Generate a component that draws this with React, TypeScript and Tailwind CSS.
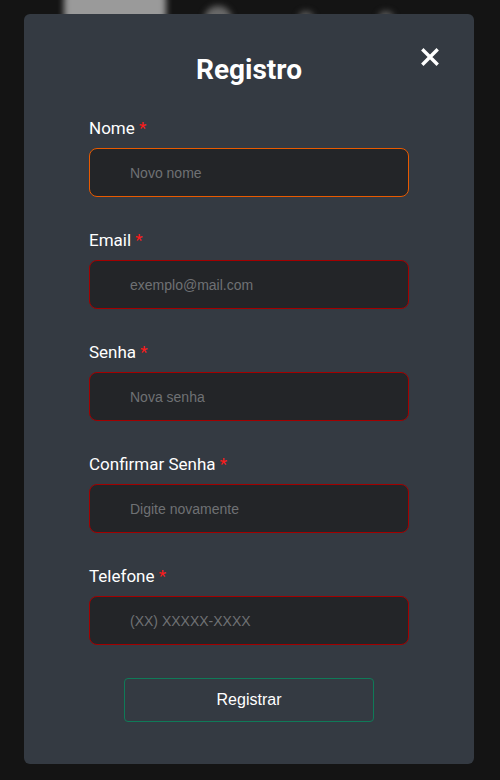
import React from 'react';

const fields = [
  { label: 'Nome', placeholder: 'Novo nome', focused: true },
  { label: 'Email', placeholder: 'exemplo@mail.com' },
  { label: 'Senha', placeholder: 'Nova senha' },
  { label: 'Confirmar Senha', placeholder: 'Digite novamente' },
  { label: 'Telefone', placeholder: '(XX) XXXXX-XXXX' },
];

export default function App() {
  return (
    <div className="relative w-[500px] h-[780px] bg-[#141414] overflow-hidden">
      {/* Page behind the modal (blurred) */}
      <div className="flex items-center pl-[64px] -mt-[20px] blur-[3px]">
        <div className="w-[102px] h-[34px] rounded-lg bg-[#9a9a9a]" />
        <div className="ml-[38px] mt-[26px] w-[28px] h-[28px] rounded-full bg-[#6a6a6a]" />
        <div className="ml-[66px] mt-[24px] w-[16px] h-[16px] rounded-full bg-[#5a5a5a]" />
        <div className="ml-[64px] mt-[24px] w-[16px] h-[16px] rounded-full bg-[#5a5a5a]" />
      </div>

      {/* Modal overlay */}
      <div className="absolute inset-0 pl-[24px] pt-[14px]">
        <div className="relative w-[450px] h-[750px] bg-[#343a42] rounded-md px-[65px] pt-[38px] font-['Liberation_Sans',Arial,sans-serif]">
          <button className="absolute right-[34px] top-[33px] text-white">
            <svg width="20" height="20" viewBox="0 0 20 20">
              <path d="M3.5 3.5 L16.5 16.5 M16.5 3.5 L3.5 16.5" stroke="white" strokeWidth="3.4" strokeLinecap="square" />
            </svg>
          </button>

          <h2 className="text-center text-white text-[28px] leading-9 font-bold font-['Roboto',sans-serif] mb-[28px]">
            Registro
          </h2>

          <form className="flex flex-col">
            {fields.map((f) => (
              <div key={f.label} className="mb-[31px]">
                <label className="block text-white text-[17px] leading-6 font-['Roboto',sans-serif] mb-[8px]">
                  {f.label} <span className="text-[#ff1a1a]">*</span>
                </label>
                <input
                  placeholder={f.placeholder}
                  className={`w-full h-[49px] rounded-lg bg-[#232528] pl-[40px] pr-3 text-[14px] text-white placeholder:text-[#6f7174] outline-none border ${
                    f.focused ? 'border-[#e85a00]' : 'border-[#a30000]'
                  }`}
                />
              </div>
            ))}
            <div className="flex justify-center mt-[2px]">
              <button
                type="button"
                className="w-[250px] h-[44px] rounded border border-[#0f7a58] text-white text-[16px]"
              >
                Registrar
              </button>
            </div>
          </form>
        </div>
      </div>
    </div>
  );
}
